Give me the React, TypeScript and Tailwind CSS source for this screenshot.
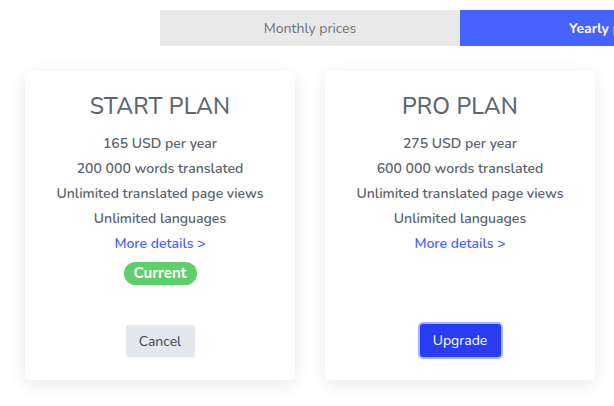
import React from "react";

const font = { fontFamily: "Nunito, Lato, 'Noto Sans', sans-serif" };

function Card({ title, price, words, current }: { title: string; price: string; words: string; current?: boolean }) {
  return (
    <div className="w-[270px] h-[309px] bg-white rounded-[5px] shadow-[0_4px_18px_rgba(0,0,0,0.09)] flex flex-col items-center pt-[21px]">
      <div className="text-[23px] leading-[30px] font-medium text-[#5d6670] tracking-[0.2px]">{title}</div>
      <div className="mt-[9px] flex flex-col items-center text-[14px] leading-[25px] font-semibold text-[#5b636d]">
        <div>{price}</div>
        <div>{words}</div>
        <div>Unlimited translated page views</div>
        <div>Unlimited languages</div>
        <div className="text-[#4d62ff]">More details &gt;</div>
      </div>
      {current ? (
        <div className="mt-[6px] h-[23px] px-[10px] rounded-full bg-[#5fcf6d] text-white font-bold text-[15px] leading-[23px]">Current</div>
      ) : (
        <div className="mt-[6px] h-[23px]" />
      )}
      <div className="flex-1" />
      {current ? (
        <button className="mb-[23px] w-[69px] h-[32px] rounded-[3px] bg-[#e2e8ee] text-[#3d4550] text-[14px] shadow-[0_1px_3px_rgba(0,0,0,0.05)]">Cancel</button>
      ) : (
        <button className="mb-[21px] w-[85px] h-[37px] rounded-[5px] bg-[#2a3df6] text-white text-[14px] border-2 border-[#a9b6ff]">Upgrade</button>
      )}
    </div>
  );
}

export default function App() {
  return (
    <div className="w-[614px] h-[406px] overflow-hidden bg-white" style={font}>
      <div className="pt-[10px] pl-[160px] flex">
        <div className="w-[300px] h-[36px] shrink-0 bg-[#e9e9e9] flex items-center justify-center text-[14px] text-[#6b727a]">Monthly prices</div>
        <div className="w-[300px] h-[36px] shrink-0 bg-[#4763ff] flex items-center justify-center text-[14px] font-bold text-white">Yearly prices</div>
      </div>
      <div className="mt-[25px] pl-[25px] flex gap-[30px]">
        <Card title="START PLAN" price="165 USD per year" words="200 000 words translated" current />
        <Card title="PRO PLAN" price="275 USD per year" words="600 000 words translated" />
      </div>
    </div>
  );
}
